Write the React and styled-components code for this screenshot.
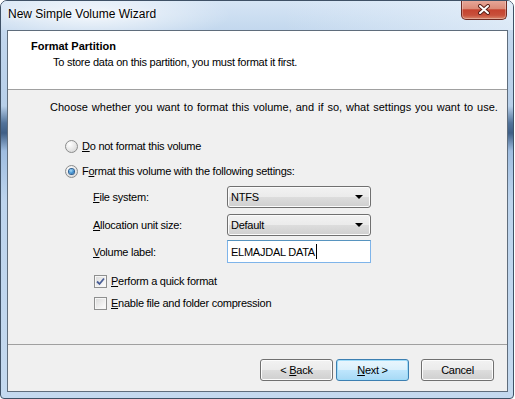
import styled, { createGlobalStyle } from 'styled-components';

const GlobalStyle = createGlobalStyle`
  html, body {
    margin: 0;
    padding: 0;
    background: #ffffff;
  }
  body {
    font-family: "Liberation Sans", Arial, sans-serif;
    font-size: 12px;
    color: #000;
  }
`;

const Window = styled.div`
  width: 514px;
  height: 399px;
  box-sizing: border-box;
  display: flex;
  flex-direction: column;
  border: 1px solid #3f5166;
  border-radius: 7px 7px 4px 4px;
  overflow: hidden;
  background: linear-gradient(
    to bottom,
    #d3e3f4 0,
    #c1d6ed 40px,
    #b7cfe9 105px,
    #52739a 122px,
    #3f5f86 132px,
    #9fbde0 150px,
    #bdd4ed 200px,
    #c4d9ef 100%
  );
`;

const TitleBar = styled.div`
  height: 29px;
  display: flex;
  align-items: flex-start;
  padding-left: 7px;
  background:
    radial-gradient(ellipse 140px 30px at 90px 14px, rgba(255, 255, 255, 0.75), rgba(255, 255, 255, 0) 100%),
    linear-gradient(to right, rgba(255, 255, 255, 0) 55%, rgba(236, 244, 252, 0.6) 100%),
    linear-gradient(to bottom, #d6e5f5, #c3d8ee);
`;

const Title = styled.span`
  margin-top: 6px;
  line-height: 15px;
  color: #000;
  text-shadow: 0 0 6px rgba(255, 255, 255, 0.9), 0 0 2px rgba(255, 255, 255, 0.9);
`;

const CloseButton = styled.div`
  margin-left: auto;
  margin-right: 6px;
  margin-top: -1px;
  width: 46px;
  height: 20px;
  box-sizing: border-box;
  display: flex;
  align-items: center;
  justify-content: center;
  border: 1px solid #6e2a22;
  border-top: none;
  border-radius: 0 0 5px 5px;
  background: linear-gradient(
    to bottom,
    #e8aa9c 0,
    #dc8b78 45%,
    #c5432f 52%,
    #c8503b 80%,
    #d9866a 100%
  );
  box-shadow: inset 0 0 0 1px rgba(255, 255, 255, 0.3);
`;

const Client = styled.div`
  flex: 1;
  display: flex;
  flex-direction: column;
  margin: 0 5px 6px 6px;
  border: 1px solid #5f6d7c;
  background: #f0f0f0;
  font-size: 11px;
  letter-spacing: -0.25px;
  white-space: nowrap;
`;

const Header = styled.div`
  height: 50px;
  padding: 8px 0 0 23px;
  background: #ffffff;
  border-bottom: 1px solid #a0a0a0;
`;

const HeaderTitle = styled.div`
  font-weight: bold;
  line-height: 15px;
  letter-spacing: 0;
`;

const HeaderText = styled.div`
  margin: 1px 0 0 22px;
  line-height: 15px;
`;

const Body = styled.div`
  flex: 1;
  display: flex;
  flex-direction: column;
  padding: 10px 0 0 42px;
`;

const Intro = styled.div`
  line-height: 15px;
  letter-spacing: 0;
  word-spacing: 0.9px;
`;

const OptionRow = styled.label`
  display: flex;
  align-items: center;
  height: 16px;
  gap: ${(p) => p.$gap}px;
  margin-top: ${(p) => p.$top}px;
  margin-left: ${(p) => p.$left}px;
`;

const Radio = styled.span`
  width: 13px;
  height: 13px;
  box-sizing: border-box;
  border-radius: 50%;
  border: 1px solid #8b8c8c;
  background: radial-gradient(circle at 35% 30%, #ffffff 0, #e6e6e6 55%, #cfcfcf 100%);
  display: flex;
  align-items: center;
  justify-content: center;
  &::after {
    content: '';
    display: ${(p) => (p.$checked ? 'block' : 'none')};
    width: 5px;
    height: 5px;
    border-radius: 50%;
    background: radial-gradient(circle at 40% 35%, #a9dcf8 0, #3d8fd0 55%, #17508c 100%);
    box-shadow: 0 0 0 1px #2e5f91;
  }
`;

const CheckBox = styled.span`
  width: 13px;
  height: 13px;
  box-sizing: border-box;
  border: 1px solid #8e8f8f;
  background: linear-gradient(135deg, #d9d9d9 0, #f4f4f4 70%, #ffffff 100%);
  box-shadow: inset 0 0 0 1px #f6f6f6;
  display: flex;
  align-items: center;
  justify-content: center;
`;

const Key = styled.span`
  text-decoration: underline;
`;

const FieldRow = styled.div`
  display: flex;
  align-items: center;
  margin-left: 43px;
  margin-top: ${(p) => p.$top}px;
`;

const FieldLabel = styled.span`
  width: 134px;
`;

const ComboBox = styled.div`
  width: 144px;
  height: 22px;
  box-sizing: border-box;
  display: flex;
  align-items: center;
  justify-content: space-between;
  padding: 0 7px 0 3px;
  border: 1px solid #707070;
  border-radius: 3px;
  background: linear-gradient(to bottom, #f2f2f2 0, #ebebeb 50%, #dddddd 50%, #cfcfcf 100%);
  box-shadow: inset 0 0 0 1px #fbfbfb;
`;

const Arrow = styled.span`
  width: 0;
  height: 0;
  border-left: 4px solid transparent;
  border-right: 4px solid transparent;
  border-top: 4px solid #000;
`;

const TextBox = styled.div`
  width: 144px;
  height: 23px;
  box-sizing: border-box;
  display: flex;
  align-items: center;
  padding-left: 3px;
  border: 1px solid #7eb4ea;
  border-top-color: #5794bf;
  background: #ffffff;
`;

const Caret = styled.span`
  width: 1px;
  height: 15px;
  background: #000;
  margin-left: 1px;
`;

const Footer = styled.div`
  height: 32px;
  display: flex;
  justify-content: flex-end;
  padding: 14px 13px 0 0;
  border-top: 1px solid #a0a0a0;
`;

const Button = styled.div`
  width: 73px;
  height: 22px;
  box-sizing: border-box;
  display: flex;
  align-items: center;
  justify-content: center;
  margin-right: ${(p) => p.$right || 0}px;
  border: 1px solid ${(p) => (p.$default ? '#3c7fb1' : '#707070')};
  border-radius: 3px;
  background: ${(p) =>
    p.$default
      ? 'linear-gradient(to bottom, #eaf6fd 0, #d9f0fc 50%, #bee6fd 50%, #a7d9f5 100%)'
      : 'linear-gradient(to bottom, #f2f2f2 0, #ebebeb 50%, #dddddd 50%, #cfcfcf 100%)'};
  box-shadow: inset 0 0 0 1px ${(p) => (p.$default ? '#9fdcf9' : '#fcfcfc')};
`;

function CloseGlyph() {
  return (
    <svg width="14" height="11" viewBox="0 0 14 11">
      <path d="M3 2 L11 9 M11 2 L3 9" stroke="#5a2018" strokeWidth="4" strokeLinecap="round" />
      <path d="M3 2 L11 9 M11 2 L3 9" stroke="#ffffff" strokeWidth="2" strokeLinecap="round" />
    </svg>
  );
}

function CheckMark() {
  return (
    <svg width="9" height="9" viewBox="0 0 9 9">
      <path d="M1 4.5 L3.5 7 L8 1.5" fill="none" stroke="#4a5f97" strokeWidth="1.8" />
    </svg>
  );
}

export default function App() {
  return (
    <>
      <GlobalStyle />
      <Window>
        <TitleBar>
          <Title>New Simple Volume Wizard</Title>
          <CloseButton>
            <CloseGlyph />
          </CloseButton>
        </TitleBar>
        <Client>
          <Header>
            <HeaderTitle>Format Partition</HeaderTitle>
            <HeaderText>To store data on this partition, you must format it first.</HeaderText>
          </Header>
          <Body>
            <Intro>
              Choose whether you want to format this volume, and if so, what settings you want to use.
            </Intro>
            <OptionRow $top={23} $left={15} $gap={4}>
              <Radio />
              <span>
                <Key>D</Key>o not format this volume
              </span>
            </OptionRow>
            <OptionRow $top={9} $left={15} $gap={4}>
              <Radio $checked />
              <span>
                F<Key>o</Key>rmat this volume with the following settings:
              </span>
            </OptionRow>
            <FieldRow $top={7}>
              <FieldLabel>
                <Key>F</Key>ile system:
              </FieldLabel>
              <ComboBox>
                <span>NTFS</span>
                <Arrow />
              </ComboBox>
            </FieldRow>
            <FieldRow $top={6}>
              <FieldLabel>
                <Key>A</Key>llocation unit size:
              </FieldLabel>
              <ComboBox>
                <span>Default</span>
                <Arrow />
              </ComboBox>
            </FieldRow>
            <FieldRow $top={4}>
              <FieldLabel>
                <Key>V</Key>olume label:
              </FieldLabel>
              <TextBox>
                <span>ELMAJDAL DATA</span>
                <Caret />
              </TextBox>
            </FieldRow>
            <OptionRow $top={10} $left={44} $gap={4}>
              <CheckBox>
                <CheckMark />
              </CheckBox>
              <span>
                <Key>P</Key>erform a quick format
              </span>
            </OptionRow>
            <OptionRow $top={6} $left={44} $gap={4}>
              <CheckBox />
              <span>
                <Key>E</Key>nable file and folder compression
              </span>
            </OptionRow>
          </Body>
          <Footer>
            <Button $right={3}>
              <span>
                &lt; <Key>B</Key>ack
              </span>
            </Button>
            <Button $default $right={12}>
              <span>
                <Key>N</Key>ext &gt;
              </span>
            </Button>
            <Button>Cancel</Button>
          </Footer>
        </Client>
      </Window>
    </>
  );
}
